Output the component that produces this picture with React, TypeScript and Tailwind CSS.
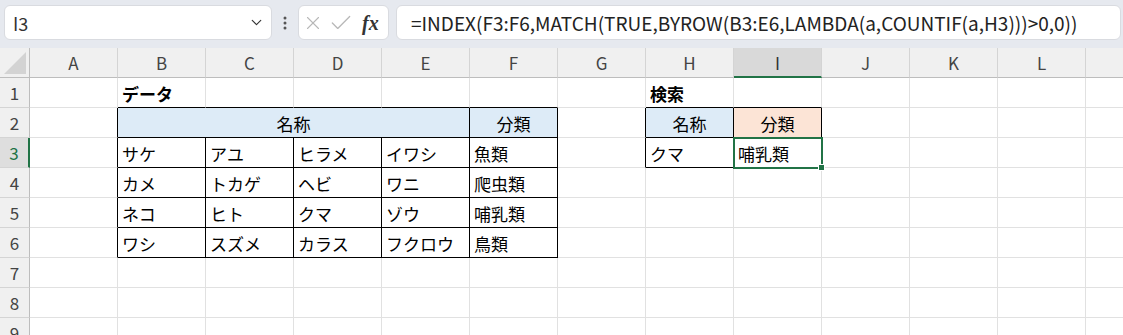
import { ChevronDown, X, Check } from 'lucide-react';

const COLS = ['A', 'B', 'C', 'D', 'E', 'F', 'G', 'H', 'I', 'J', 'K', 'L', 'M'];
const ROWS = [1, 2, 3, 4, 5, 6, 7, 8, 9];

type Cell = { text: string; bold?: boolean; center?: boolean; bg?: string };

const CELLS: Record<string, Cell> = {
  B1: { text: 'データ', bold: true },
  B2: { text: '名称', center: true, bg: 'blue' },
  F2: { text: '分類', center: true, bg: 'blue' },
  B3: { text: 'サケ' }, C3: { text: 'アユ' }, D3: { text: 'ヒラメ' }, E3: { text: 'イワシ' }, F3: { text: '魚類' },
  B4: { text: 'カメ' }, C4: { text: 'トカゲ' }, D4: { text: 'ヘビ' }, E4: { text: 'ワニ' }, F4: { text: '爬虫類' },
  B5: { text: 'ネコ' }, C5: { text: 'ヒト' }, D5: { text: 'クマ' }, E5: { text: 'ゾウ' }, F5: { text: '哺乳類' },
  B6: { text: 'ワシ' }, C6: { text: 'スズメ' }, D6: { text: 'カラス' }, E6: { text: 'フクロウ' }, F6: { text: '鳥類' },
  H1: { text: '検索', bold: true },
  H2: { text: '名称', center: true, bg: 'blue' },
  I2: { text: '分類', center: true, bg: 'peach' },
  H3: { text: 'クマ' },
  I3: { text: '哺乳類' },
};

// bordered ranges: B2:F6 and H2:I3
const inTable = (c: number, r: number) =>
  (c >= 1 && c <= 5 && r >= 2 && r <= 6) || (c >= 7 && c <= 8 && r >= 2 && r <= 3);

const FONT = "font-['Noto_Sans_CJK_JP','Noto_Sans',sans-serif]";

const TopBar = () => (
  <div className={`h-[48px] bg-[#e6e9ef] flex items-start pt-[5px] ${FONT}`}>
    {/* Name box */}
    <div className="ml-[4px] w-[268px] h-[35px] bg-white rounded-[6px] border border-[#d9dbe0] flex items-center pl-[8px] pr-[6px]">
      <span className="text-[18px] text-[#333] leading-none flex-1">I3</span>
      <ChevronDown size={17} strokeWidth={1.6} className="text-[#333]" />
    </div>
    {/* Dots */}
    <div className="w-[26px] h-[35px] flex items-center justify-center">
      <svg width="4" height="14" viewBox="0 0 4 14">
        <circle cx="2" cy="2" r="1.5" fill="#555" />
        <circle cx="2" cy="7" r="1.5" fill="#555" />
        <circle cx="2" cy="12" r="1.5" fill="#555" />
      </svg>
    </div>
    {/* Cancel / enter / fx */}
    <div className="w-[91px] h-[35px] bg-white rounded-[6px] border border-[#d9dbe0] flex items-center pl-[3px] gap-[4px]">
      <X size={22} strokeWidth={1.2} className="text-[#b8b8b8]" />
      <Check size={26} strokeWidth={1.2} className="text-[#b8b8b8]" />
      <span className="font-['Liberation_Serif',serif] italic font-bold text-[20px] text-[#333] leading-none ml-[4px]">fx</span>
    </div>
    {/* Formula */}
    <div className="ml-[7px] w-[725px] h-[35px] bg-white rounded-[6px] border border-[#d9dbe0] flex items-center pl-[14px] overflow-hidden">
      <span className="text-[19px] text-[#222] leading-none whitespace-nowrap">
        =INDEX(F3:F6,MATCH(TRUE,BYROW(B3:E6,LAMBDA(a,COUNTIF(a,H3)))&gt;0,0))
      </span>
    </div>
  </div>
);

const Sheet = () => (
  <div className={`grid grid-cols-[30px_repeat(13,88px)] ${FONT}`}>
    {/* corner */}
    <div className="h-[30px] bg-[#f0f0f0] border-r border-b border-r-[#bdbdbd] border-b-[#bdbdbd] flex items-end justify-end p-[3px]">
      <svg width="22" height="22" viewBox="0 0 22 22">
        <polygon points="22,0 22,22 0,22" fill="#d3d3d3" />
      </svg>
    </div>
    {COLS.map((c) => (
      <div
        key={c}
        className={
          c === 'I'
            ? 'h-[30px] bg-[#d9d9d9] border-r border-r-[#d4d4d4] border-b-2 border-b-[#217346] flex items-center justify-center text-[17px] text-[#333] leading-none'
            : 'h-[30px] bg-[#f0f0f0] border-r border-r-[#d4d4d4] border-b border-b-[#bdbdbd] flex items-center justify-center text-[17px] text-[#444] leading-none'
        }
      >
        {c === 'M' ? '' : c}
      </div>
    ))}

    {ROWS.map((r) => (
      <div key={r} className="contents">
        <div
          className={
            r === 3
              ? 'h-[30px] bg-[#dedede] border-r-2 border-r-[#217346] border-b border-b-[#d4d4d4] flex items-center justify-center text-[17px] text-[#217346] leading-none'
              : 'h-[30px] bg-[#f0f0f0] border-r border-r-[#bdbdbd] border-b border-b-[#d4d4d4] flex items-center justify-center text-[17px] text-[#444] leading-none'
          }
        >
          {r}
        </div>
        {COLS.map((c, ci) => {
          const key = `${c}${r}`;
          if (r === 2 && (c === 'C' || c === 'D' || c === 'E')) return null;
          const cell = CELLS[key];
          const span = key === 'B2';
          const lastCol = span ? ci + 3 : ci;
          const rightBlack = inTable(ci, r) || inTable(lastCol + 1, r);
          const bottomBlack = inTable(ci, r) || inTable(ci, r + 1);
          const bg =
            cell?.bg === 'blue' ? 'bg-[#ddebf7]' : cell?.bg === 'peach' ? 'bg-[#fce4d6]' : 'bg-white';
          return (
            <div
              key={key}
              className={`relative h-[30px] border-r border-b ${bg} ${span ? 'col-span-4' : ''} ${
                rightBlack ? 'border-r-black' : 'border-r-[#e1e1e1]'
              } ${bottomBlack ? 'border-b-black' : 'border-b-[#e1e1e1]'} flex items-center pt-[2px] ${
                cell?.center ? 'justify-center' : 'pl-[4px]'
              }`}
            >
              {cell && (
                <span className={`text-[17px] leading-none text-black whitespace-nowrap ${cell.bold ? 'font-bold' : ''}`}>
                  {cell.text}
                </span>
              )}
              {key === 'I3' && (
                <div className="absolute z-10 -left-[1px] -top-[1px] w-[90px] h-[32px] border-2 border-[#217346]">
                  <div className="absolute -right-[4px] -bottom-[4px] w-[7px] h-[7px] bg-[#217346] border border-white" />
                </div>
              )}
            </div>
          );
        })}
      </div>
    ))}
  </div>
);

export default function App() {
  return (
    <div className="w-[1123px] h-[335px] overflow-hidden bg-white">
      <TopBar />
      <Sheet />
    </div>
  );
}
